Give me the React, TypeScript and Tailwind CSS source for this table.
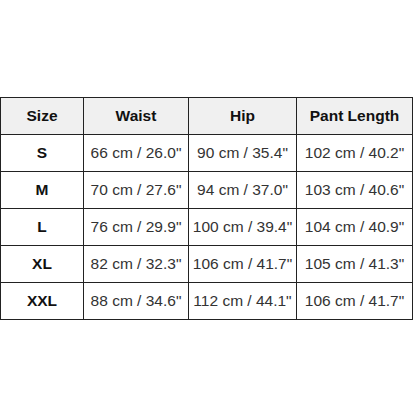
const rows = [
  ['S', '66 cm / 26.0"', '90 cm / 35.4"', '102 cm / 40.2"'],
  ['M', '70 cm / 27.6"', '94 cm / 37.0"', '103 cm / 40.6"'],
  ['L', '76 cm / 29.9"', '100 cm / 39.4"', '104 cm / 40.9"'],
  ['XL', '82 cm / 32.3"', '106 cm / 41.7"', '105 cm / 41.3"'],
  ['XXL', '88 cm / 34.6"', '112 cm / 44.1"', '106 cm / 41.7"'],
];

export default function App() {
  return (
    <div className="flex h-[416px] w-[416px] items-center bg-white font-['Liberation_Sans',Arial,sans-serif]">
      <table className="w-[412px] table-fixed border-collapse text-[15.5px]">
        <colgroup>
          <col className="w-[83px]" />
          <col className="w-[105px]" />
          <col className="w-[108px]" />
          <col className="w-[116px]" />
        </colgroup>
        <thead>
          <tr className="h-[37px] bg-[#f0f0f0]">
            {['Size', 'Waist', 'Hip', 'Pant Length'].map((h) => (
              <th key={h} className="border border-[#222] text-center font-bold text-[#111]">
                {h}
              </th>
            ))}
          </tr>
        </thead>
        <tbody>
          {rows.map((r) => (
            <tr key={r[0]} className="h-[37px]">
              <td className="border border-[#222] text-center font-bold text-[#111]">{r[0]}</td>
              <td className="border border-[#222] text-center text-[#333]">{r[1]}</td>
              <td className="border border-[#222] text-center text-[#333]">{r[2]}</td>
              <td className="border border-[#222] text-center text-[#333]">{r[3]}</td>
            </tr>
          ))}
        </tbody>
      </table>
    </div>
  );
}
